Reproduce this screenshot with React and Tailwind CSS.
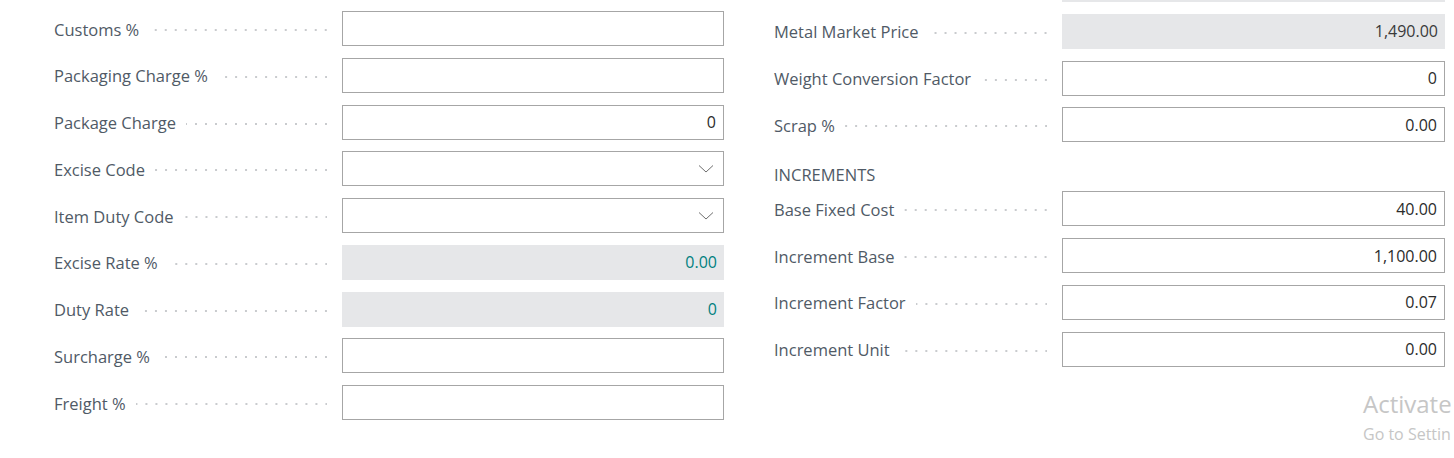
import React from 'react';

const leftFields = [
  { label: 'Customs %', value: '', kind: 'input' },
  { label: 'Packaging Charge %', value: '', kind: 'input' },
  { label: 'Package Charge', value: '0', kind: 'input' },
  { label: 'Excise Code', value: '', kind: 'select' },
  { label: 'Item Duty Code', value: '', kind: 'select' },
  { label: 'Excise Rate %', value: '0.00', kind: 'readonly', teal: true },
  { label: 'Duty Rate', value: '0', kind: 'readonly', teal: true },
  { label: 'Surcharge %', value: '', kind: 'input' },
  { label: 'Freight %', value: '', kind: 'input' }
];

const rightTop = [
  { label: 'Metal Market Price', value: '1,490.00', kind: 'readonly' },
  { label: 'Weight Conversion Factor', value: '0', kind: 'input' },
  { label: 'Scrap %', value: '0.00', kind: 'input' }
];

const increments = [
  { label: 'Base Fixed Cost', value: '40.00', kind: 'input' },
  { label: 'Increment Base', value: '1,100.00', kind: 'input' },
  { label: 'Increment Factor', value: '0.07', kind: 'input' },
  { label: 'Increment Unit', value: '0.00', kind: 'input' }
];

function Chevron() {
  return (
    <svg width="16" height="9" viewBox="0 0 16 9" fill="none" className="shrink-0">
      <path d="M1 1.5l7 6.5 7-6.5" stroke="#6e6e6e" strokeWidth="1" />
    </svg>
  );
}

function Field({ field }) {
  if (field.kind === 'readonly') {
    return (
      <div className="h-[35px] flex-1 bg-[#e6e7e9] flex items-center justify-end pr-[7px] text-[16px]">
        <span className={field.teal ? 'text-[#00807f]' : 'text-[#3a3a3a]'}>{field.value}</span>
      </div>
    );
  }
  return (
    <div className="h-[35px] flex-1 border border-[#a6a6a6] bg-white flex items-center justify-end pr-[7px] text-[16px]">
      {field.kind === 'select' ? (
        <span className="pr-[2px]"><Chevron /></span>
      ) : (
        <span className="text-[#2b2b2b]">{field.value}</span>
      )}
    </div>
  );
}

function Row({ field }) {
  return (
    <div className="flex items-center h-[35px]">
      <div className="w-[288px] shrink-0 flex items-center pr-[15px] pt-[3px]">
        <span className="text-[#505a66] whitespace-nowrap text-[16.5px]">{field.label}</span>
        <span className="flex-1 ml-[10px] h-[2px] bg-[linear-gradient(90deg,transparent_8px,#c9cbce_8px)] bg-[length:10px_2px] bg-repeat-x bg-right" />
      </div>
      <Field field={field} />
    </div>
  );
}

export default function App() {
  return (
    <div className="relative w-[1454px] h-[458px] overflow-hidden bg-white font-['Open_Sans',sans-serif]">
      <div className="flex pl-[54px] gap-[50px]">
        <div className="w-[670px] flex flex-col gap-[11.75px] pt-[11px]">
          {leftFields.map(f => (
            <Row key={f.label} field={f} />
          ))}
        </div>
        <div className="w-[671px] flex flex-col gap-[11.75px] mt-[-33px]">
          <div className="flex h-[35px]">
            <div className="w-[288px] shrink-0" />
            <div className="flex-1 bg-[#e6e7e9]" />
          </div>
          {rightTop.map(f => (
            <Row key={f.label} field={f} />
          ))}
          <div className="h-[25.5px] pt-[11px] leading-[20px] text-[#505a66] font-medium text-[16.5px]">
            INCREMENTS
          </div>
          {increments.map(f => (
            <Row key={f.label} field={f} />
          ))}
        </div>
      </div>
      <div className="absolute left-[1363px] top-[389px] text-[#c6c6c6] whitespace-nowrap">
        <div className="text-[24px] leading-[30px]">Activate</div>
        <div className="text-[16px] leading-[22px] mt-[4px]">Go to Settin</div>
      </div>
    </div>
  );
}
